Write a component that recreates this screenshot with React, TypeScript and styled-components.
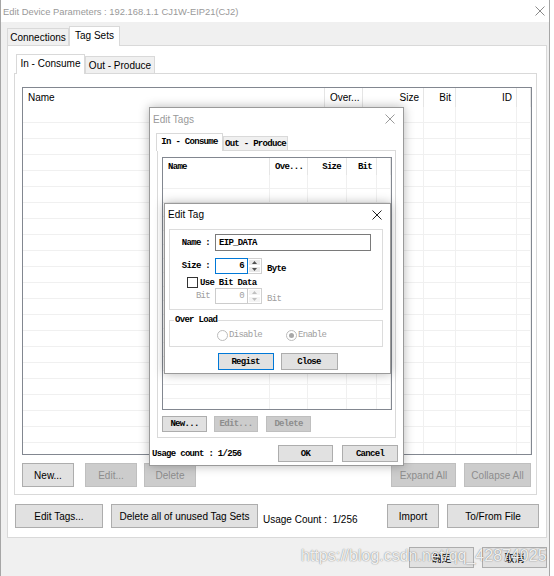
import React from 'react';
import styled, { createGlobalStyle, css } from 'styled-components';

const UI = `"Liberation Sans", "Noto Sans CJK SC", Arial, sans-serif`;
const MONO = `"Liberation Mono", "DejaVu Sans Mono", monospace`;

const monoText = css`
  font-family: ${MONO};
  font-size: 9px;
  font-weight: bold;
  letter-spacing: -0.7px;
`;

const GlobalStyle = createGlobalStyle`
  html, body {
    margin: 0;
    padding: 0;
    background: #ffffff;
  }
  body {
    width: 554px;
    height: 576px;
    overflow: hidden;
  }
`;

const Window = styled.div`
  position: relative;
  box-sizing: border-box;
  width: 550px;
  height: 576px;
  border-left: 1px solid #a6a6a6;
  border-right: 1px solid #a6a6a6;
  background: #f0f0f0;
  display: flex;
  flex-direction: column;
  font-family: ${UI};
  font-size: 10px;
  color: #000;
  overflow: hidden;
`;

const TitleBar = styled.div<{ $h: number; $active?: boolean; $pr: number; $pl: number; $fs?: number }>`
  flex: none;
  height: ${(p) => p.$h}px;
  background: #fff;
  display: flex;
  align-items: center;
  justify-content: space-between;
  padding: 0 ${(p) => p.$pr}px 0 ${(p) => p.$pl}px;
  font-family: ${UI};
  font-size: ${(p) => p.$fs ?? 10}px;
  color: ${(p) => (p.$active ? '#000' : '#999')};
`;

const TabStrip = styled.div<{ $pl: number; $mt: number }>`
  position: relative;
  z-index: 1;
  display: flex;
  align-items: flex-end;
  padding-left: ${(p) => p.$pl}px;
  margin-top: ${(p) => p.$mt}px;
`;

const Tab = styled.div<{ $active?: boolean; $w: number; $h: number; $mono?: boolean }>`
  box-sizing: border-box;
  flex: none;
  width: ${(p) => p.$w}px;
  height: ${(p) => p.$h}px;
  margin-bottom: ${(p) => (p.$active ? -1 : 0)}px;
  border: 1px solid #d9d9d9;
  border-bottom: none;
  background: ${(p) => (p.$active ? '#fff' : '#f0f0f0')};
  display: flex;
  align-items: center;
  justify-content: center;
  white-space: nowrap;
  padding-bottom: ${(p) => (p.$active ? 2 : 0)}px;
  ${(p) => (p.$mono ? monoText : css`font-size: 10px;`)}
`;

const Panel = styled.div`
  box-sizing: border-box;
  flex: none;
  width: 540px;
  height: 493px;
  margin-left: 6px;
  background: #fff;
  border: 1px solid #d9d9d9;
  padding: 8px 0 0 6px;
  display: flex;
  flex-direction: column;
`;

const Page = styled.div<{ $w: number; $h: number; $pad: string; $ml?: number }>`
  box-sizing: border-box;
  flex: none;
  width: ${(p) => p.$w}px;
  height: ${(p) => p.$h}px;
  margin-left: ${(p) => p.$ml ?? 0}px;
  background: #fff;
  border: 1px solid #d9d9d9;
  padding: ${(p) => p.$pad};
  display: flex;
  flex-direction: column;
`;

const ButtonRow = styled.div<{ $mt: number; $w?: number; $ml?: number }>`
  flex: none;
  display: flex;
  align-items: center;
  margin-top: ${(p) => p.$mt}px;
  margin-left: ${(p) => p.$ml ?? 0}px;
  width: ${(p) => (p.$w ? `${p.$w}px` : 'auto')};
`;

const Spacer = styled.div`
  flex: 1;
`;

const Button = styled.div<{
  $w: number;
  $h: number;
  $ml?: number;
  $disabled?: boolean;
  $focus?: boolean;
  $mono?: boolean;
}>`
  box-sizing: border-box;
  flex: none;
  width: ${(p) => p.$w}px;
  height: ${(p) => p.$h}px;
  margin-left: ${(p) => p.$ml ?? 0}px;
  display: flex;
  align-items: center;
  justify-content: center;
  white-space: nowrap;
  background: ${(p) => (p.$disabled ? '#cccccc' : '#e1e1e1')};
  border: 1px solid ${(p) => (p.$focus ? '#0078d7' : p.$disabled ? '#bfbfbf' : '#adadad')};
  color: ${(p) => (p.$disabled ? '#8d8d8d' : '#000')};
  ${(p) => (p.$mono ? monoText : css`font-family: ${UI}; font-size: 10px;`)}
`;

const CountText = styled.span<{ $ml: number; $mono?: boolean }>`
  margin-left: ${(p) => p.$ml}px;
  white-space: nowrap;
  ${(p) => (p.$mono ? monoText : css`font-size: 10px; padding-top: 6px;`)}
`;

const Footer = styled.div`
  flex: none;
  display: flex;
  justify-content: flex-end;
  gap: 8px;
  padding: 9px 2px 0 0;
`;

const Watermark = styled.div`
  position: absolute;
  left: 300px;
  top: 547px;
  font-family: "Liberation Sans", Arial, sans-serif;
  font-size: 16px;
  color: rgba(255, 255, 255, 0.9);
  text-shadow: 0 0 1px rgba(0, 0, 0, 0.45), 0 0 2px rgba(0, 0, 0, 0.2);
  white-space: nowrap;
  pointer-events: none;
`;

/* ---- list view ---- */

type Col = { label: string; w: number; right?: boolean; pad: number };

const Grid = styled.div<{ $w: number; $h: number }>`
  box-sizing: border-box;
  flex: none;
  width: ${(p) => p.$w}px;
  height: ${(p) => p.$h}px;
  border: 1px solid #828790;
  background: #fff;
  overflow: hidden;
`;

const GridRow = styled.div<{ $h: number; $cols: string }>`
  display: grid;
  grid-template-columns: ${(p) => p.$cols};
  height: ${(p) => p.$h}px;
`;

const HeadCell = styled.div<{ $right?: boolean; $pad: number; $mono?: boolean }>`
  box-sizing: border-box;
  display: flex;
  align-items: center;
  justify-content: ${(p) => (p.$right ? 'flex-end' : 'flex-start')};
  padding: ${(p) => (p.$right ? `0 ${p.$pad}px 0 0` : `0 0 0 ${p.$pad}px`)};
  border-right: 1px solid #e5e5e5;
  white-space: nowrap;
  overflow: hidden;
  color: #000;
  ${(p) => (p.$mono ? monoText : css`font-size: 10px;`)}
`;

const BodyCell = styled.div`
  box-sizing: border-box;
  border-right: 1px solid #f0f0f0;
  border-bottom: 1px solid #f0f0f0;
`;

const ListView = ({
  cols,
  w,
  h,
  headH,
  rowH,
  mono,
}: {
  cols: Col[];
  w: number;
  h: number;
  headH: number;
  rowH: number;
  mono?: boolean;
}) => {
  const template = cols.map((c) => `${c.w}px`).join(' ') + ' 1fr';
  const rows = Math.ceil((h - headH) / rowH) + 1;
  return (
    <Grid $w={w} $h={h}>
      <GridRow $h={headH} $cols={template}>
        {cols.map((c) => (
          <HeadCell key={c.label} $right={c.right} $pad={c.pad} $mono={mono}>
            {c.label}
          </HeadCell>
        ))}
        <HeadCell $pad={0} />
      </GridRow>
      {Array.from({ length: rows }).map((_, i) => (
        <GridRow key={i} $h={rowH} $cols={template}>
          {cols.map((c) => (
            <BodyCell key={c.label} />
          ))}
          <BodyCell />
        </GridRow>
      ))}
    </Grid>
  );
};

const CloseIcon = ({ color }: { color: string }) => (
  <svg width="10" height="10" viewBox="0 0 10 10">
    <path d="M0.5 0.5L9.5 9.5M9.5 0.5L0.5 9.5" stroke={color} strokeWidth="1" fill="none" />
  </svg>
);

/* ---- dialogs ---- */

const Dialog = styled.div<{ $x: number; $y: number; $w: number; $h: number; $z: number }>`
  position: absolute;
  left: ${(p) => p.$x}px;
  top: ${(p) => p.$y}px;
  z-index: ${(p) => p.$z};
  box-sizing: border-box;
  width: ${(p) => p.$w}px;
  height: ${(p) => p.$h}px;
  background: #fff;
  border: 1px solid #9a9a9a;
  box-shadow: 0 0 10px rgba(0, 0, 0, 0.28);
  display: flex;
  flex-direction: column;
`;

const DialogFooter = styled.div`
  display: flex;
  align-items: center;
  margin-top: 7px;
  padding: 0 5px 0 2px;
  gap: 9px;
`;

const TagBody = styled.div`
  display: flex;
  flex-direction: column;
  padding-left: 4px;
`;

const GroupBox = styled.div`
  box-sizing: border-box;
  width: 214px;
  margin-top: 4px;
  border: 1px solid #dcdcdc;
  padding: 4px 0 5px 0;
  display: flex;
  flex-direction: column;
`;

const FieldRow = styled.div<{ $mt: number; $h: number }>`
  display: flex;
  align-items: center;
  margin-top: ${(p) => p.$mt}px;
  height: ${(p) => p.$h}px;
`;

const Label = styled.span<{ $disabled?: boolean }>`
  box-sizing: border-box;
  flex: none;
  width: 45px;
  padding-right: 5px;
  text-align: right;
  white-space: nowrap;
  color: ${(p) => (p.$disabled ? '#a0a0a0' : '#000')};
  ${monoText}
  font-weight: ${(p) => (p.$disabled ? 'normal' : 'bold')};
`;

const Unit = styled.span<{ $disabled?: boolean }>`
  margin-left: 5px;
  align-self: flex-end;
  white-space: nowrap;
  color: ${(p) => (p.$disabled ? '#a0a0a0' : '#000')};
  ${monoText}
  font-weight: ${(p) => (p.$disabled ? 'normal' : 'bold')};
`;

const TextField = styled.div<{ $w: number; $focus?: boolean; $disabled?: boolean; $right?: boolean }>`
  box-sizing: border-box;
  flex: none;
  width: ${(p) => p.$w}px;
  height: 100%;
  border: 1px solid ${(p) => (p.$focus ? '#0078d7' : p.$disabled ? '#cccccc' : '#7a7a7a')};
  background: #fff;
  display: flex;
  align-items: center;
  justify-content: ${(p) => (p.$right ? 'flex-end' : 'flex-start')};
  padding: 0 3px;
  color: ${(p) => (p.$disabled ? '#a0a0a0' : '#000')};
  ${monoText}
  font-weight: ${(p) => (p.$disabled ? 'normal' : 'bold')};
`;

const Spin = styled.div`
  flex: none;
  width: 14px;
  height: 100%;
  display: flex;
  flex-direction: column;
  box-sizing: border-box;
  border: 1px solid #d0d0d0;
  border-left: none;
  background: #fff;
`;

const SpinHalf = styled.div<{ $disabled?: boolean }>`
  flex: 1;
  margin: 1px;
  background: ${(p) => (p.$disabled ? '#f4f4f4' : '#e8e8e8')};
  display: flex;
  align-items: center;
  justify-content: center;
`;

const Arrow = ({ up, color }: { up?: boolean; color: string }) => (
  <svg width="5" height="3" viewBox="0 0 5 3">
    <path d={up ? 'M0 3L2.5 0L5 3Z' : 'M0 0L2.5 3L5 0Z'} fill={color} />
  </svg>
);

const SpinBox = ({ value, focus, disabled }: { value: string; focus?: boolean; disabled?: boolean }) => {
  const c = disabled ? '#c0c0c0' : '#505050';
  return (
    <>
      <TextField $w={33} $focus={focus} $disabled={disabled} $right>
        {value}
      </TextField>
      <Spin>
        <SpinHalf $disabled={disabled}>
          <Arrow up color={c} />
        </SpinHalf>
        <SpinHalf $disabled={disabled}>
          <Arrow color={c} />
        </SpinHalf>
      </Spin>
    </>
  );
};

const CheckBox = styled.span`
  box-sizing: border-box;
  flex: none;
  width: 11px;
  height: 11px;
  margin-left: 17px;
  border: 1px solid #333;
  background: #fff;
`;

const CheckLabel = styled.span`
  margin-left: 2px;
  white-space: nowrap;
  ${monoText}
`;

const FieldSet = styled.fieldset`
  box-sizing: border-box;
  width: 214px;
  margin: 5px 0 0 0;
  padding: 0;
  min-width: 0;
  border: 1px solid #dcdcdc;
`;

const Legend = styled.legend`
  margin-left: 4px;
  padding: 0 1px;
  line-height: 10px;
  ${monoText}
`;

const RadioRow = styled.div`
  display: flex;
  align-items: center;
  height: 22px;
  padding-left: 47px;
  margin-top: -1px;
`;

const RadioItem = styled.div<{ $w: number }>`
  display: flex;
  align-items: center;
  width: ${(p) => p.$w}px;
  color: #a0a0a0;
  ${monoText}
  font-weight: normal;
`;

const RadioDot = styled.span<{ $checked?: boolean }>`
  position: relative;
  box-sizing: border-box;
  flex: none;
  width: 11px;
  height: 11px;
  margin-right: 1px;
  border-radius: 50%;
  border: 1px solid #bcbcbc;
  background: #fff;
  ${(p) =>
    p.$checked &&
    css`
      &::after {
        content: '';
        position: absolute;
        left: 2px;
        top: 2px;
        width: 5px;
        height: 5px;
        border-radius: 50%;
        background: #a8a8a8;
      }
    `}
`;

const CenterRow = styled.div`
  display: flex;
  justify-content: center;
  gap: 7px;
  margin-top: 6px;
  padding-right: 4px;
`;

const mainCols: Col[] = [
  { label: 'Name', w: 302, pad: 5 },
  { label: 'Over...', w: 38, pad: 5 },
  { label: 'Size', w: 61, pad: 4, right: true },
  { label: 'Bit', w: 32, pad: 4, right: true },
  { label: 'ID', w: 61, pad: 4, right: true },
];

const tagCols: Col[] = [
  { label: 'Name', w: 107, pad: 5 },
  { label: 'Ove...', w: 38, pad: 5 },
  { label: 'Size', w: 39, pad: 5, right: true },
  { label: 'Bit', w: 30, pad: 4, right: true },
];

const EditTagsDialog = () => (
  <Dialog $x={148} $y={107} $w={255} $h={359} $z={2}>
    <TitleBar $h={22} $pl={3} $pr={8}>
      <span>Edit Tags</span>
      <CloseIcon color="#9a9a9a" />
    </TitleBar>
    <TabStrip $pl={6} $mt={3}>
      <Tab $active $w={67} $h={18} $mono>
        In - Consume
      </Tab>
      <Tab $w={65} $h={14} $mono>
        Out - Produce
      </Tab>
    </TabStrip>
    <Page $w={239} $h={288} $ml={7} $pad="6px 0 0 4px">
      <ListView cols={tagCols} w={230} h={253} headH={17} rowH={14} mono />
      <ButtonRow $mt={6}>
        <Button $w={45} $h={16} $mono>
          New...
        </Button>
        <Button $w={44} $h={16} $ml={7} $mono $disabled>
          Edit...
        </Button>
        <Button $w={45} $h={16} $ml={8} $mono $disabled>
          Delete
        </Button>
      </ButtonRow>
    </Page>
    <DialogFooter>
      <CountText $ml={0} $mono>
        Usage count : 1/256
      </CountText>
      <Spacer />
      <Button $w={55} $h={17} $mono>
        OK
      </Button>
      <Button $w={56} $h={17} $mono>
        Cancel
      </Button>
    </DialogFooter>
  </Dialog>
);

const EditTagDialog = () => (
  <Dialog $x={163} $y={203} $w={227} $h={171} $z={3}>
    <TitleBar $h={21} $pl={3} $pr={8} $active>
      <span>Edit Tag</span>
      <CloseIcon color="#222" />
    </TitleBar>
    <TagBody>
      <GroupBox>
        <FieldRow $mt={0} $h={17}>
          <Label>Name :</Label>
          <TextField $w={156}>EIP_DATA</TextField>
        </FieldRow>
        <FieldRow $mt={7} $h={16}>
          <Label>Size :</Label>
          <SpinBox value="6" focus />
          <Unit>Byte</Unit>
        </FieldRow>
        <FieldRow $mt={3} $h={11}>
          <CheckBox />
          <CheckLabel>Use Bit Data</CheckLabel>
        </FieldRow>
        <FieldRow $mt={0} $h={16}>
          <Label $disabled>Bit</Label>
          <SpinBox value="0" disabled />
          <Unit $disabled>Bit</Unit>
        </FieldRow>
      </GroupBox>
      <FieldSet>
        <Legend>Over Load</Legend>
        <RadioRow>
          <RadioItem $w={69}>
            <RadioDot />
            Disable
          </RadioItem>
          <RadioItem $w={50}>
            <RadioDot $checked />
            Enable
          </RadioItem>
        </RadioRow>
      </FieldSet>
      <CenterRow>
        <Button $w={56} $h={17} $mono $focus>
          Regist
        </Button>
        <Button $w={57} $h={17} $mono>
          Close
        </Button>
      </CenterRow>
    </TagBody>
  </Dialog>
);

const App = () => (
  <>
    <GlobalStyle />
    <Window>
      <TitleBar $h={22} $pl={2} $pr={4} $fs={9.4}>
        <span>Edit Device Parameters : 192.168.1.1 CJ1W-EIP21(CJ2)</span>
        <CloseIcon color="#8a8a8a" />
      </TitleBar>
      <TabStrip $pl={6} $mt={4}>
        <Tab $w={62} $h={17}>
          Connections
        </Tab>
        <Tab $active $w={51} $h={20}>
          Tag Sets
        </Tab>
      </TabStrip>
      <Panel>
        <TabStrip $pl={2} $mt={0}>
          <Tab $active $w={69} $h={20}>
            In - Consume
          </Tab>
          <Tab $w={70} $h={17}>
            Out - Produce
          </Tab>
        </TabStrip>
        <Page $w={523} $h={422} $pad="13px 0 0 7px">
          <ListView cols={mainCols} w={510} h={368} headH={19} rowH={16} />
          <ButtonRow $mt={8} $w={509}>
            <Button $w={52} $h={24}>
              New...
            </Button>
            <Button $w={52} $h={24} $ml={11} $disabled>
              Edit...
            </Button>
            <Button $w={52} $h={24} $ml={7} $disabled>
              Delete
            </Button>
            <Spacer />
            <Button $w={65} $h={24} $disabled>
              Expand All
            </Button>
            <Button $w={67} $h={24} $ml={8} $disabled>
              Collapse All
            </Button>
          </ButtonRow>
        </Page>
        <ButtonRow $mt={9} $ml={1} $w={524}>
          <Button $w={88} $h={24}>
            Edit Tags...
          </Button>
          <Button $w={147} $h={24} $ml={8}>
            Delete all of unused Tag Sets
          </Button>
          <CountText $ml={5}>Usage Count :&nbsp; 1/256</CountText>
          <Spacer />
          <Button $w={52} $h={24}>
            Import
          </Button>
          <Button $w={92} $h={24} $ml={8}>
            To/From File
          </Button>
        </ButtonRow>
      </Panel>
      <Footer>
        <Button $w={65} $h={21}>
          确定
        </Button>
        <Button $w={65} $h={21}>
          取消
        </Button>
      </Footer>
      <EditTagsDialog />
      <EditTagDialog />
      <Watermark>https://blog.csdn.net/qq_42874025</Watermark>
    </Window>
  </>
);

export default App;
